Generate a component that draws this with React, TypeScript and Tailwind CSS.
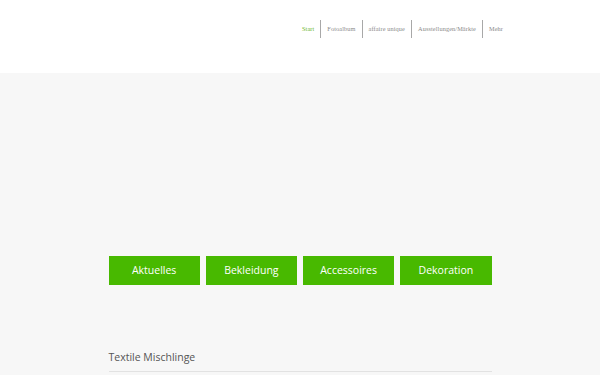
export default function App() {
  const nav = ["Start", "Fotoalbum", "affaire unique", "Ausstellungen/Märkte", "Mehr"];
  const buttons = ["Aktuelles", "Bekleidung", "Accessoires", "Dekoration"];
  return (
    <div className="w-[600px] h-[375px] overflow-hidden bg-[#f7f7f7]" style={{ fontFamily: '"Open Sans", sans-serif' }}>
      <header className="h-[73px] bg-white flex justify-end pt-[20px] pr-[91px]">
        <nav className="flex h-[18px] items-center" style={{ fontFamily: '"Liberation Serif", serif' }}>
          {nav.map((n, i) => (
            <div
              key={n}
              className={`h-[18px] flex items-center text-[6.3px] tracking-[0.1px] px-[6px] ${i > 0 ? "border-l border-[#a8a8a8]" : ""} ${i === 0 ? "text-[#6cb52b]" : "text-[#8a8a8a]"}`}
            >
              {n}
            </div>
          ))}
        </nav>
      </header>
      <main className="w-[383px] mx-auto">
        <div className="flex gap-[6px] mt-[183px]">
          {buttons.map((b) => (
            <div key={b} className="flex-1 h-[29px] bg-[#48b900] text-white text-[10.5px] flex items-center justify-center">
              {b}
            </div>
          ))}
        </div>
        <div className="mt-[65px] text-[10.5px] text-[#555555] pb-[5px] border-b border-[#e2e2e2]">Textile Mischlinge</div>
      </main>
    </div>
  );
}
